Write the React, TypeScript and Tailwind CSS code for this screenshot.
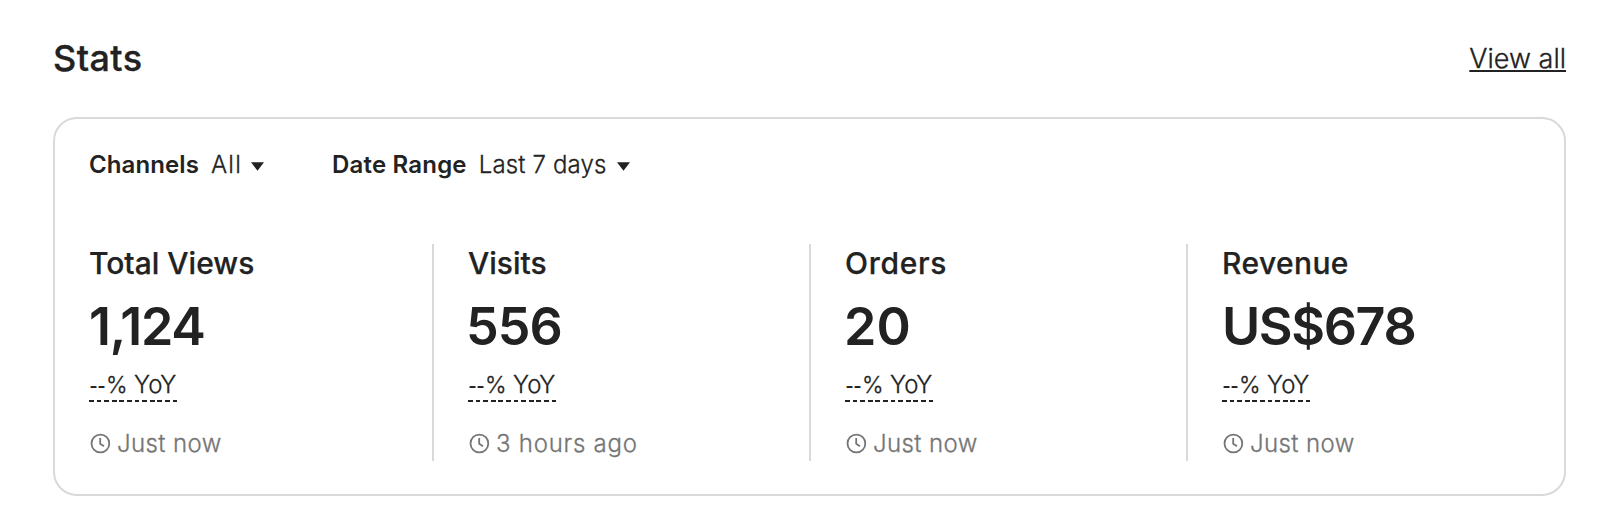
type Stat = {
  title: string;
  value: string;
  updated: string;
  titleClass: string;
  valueClass: string;
  updatedClass: string;
};

const stats: Stat[] = [
  { title: "Total Views", value: "1,124", updated: "Just now", titleClass: "", valueClass: "tracking-[-1.3px]", updatedClass: "tracking-[0.4px]" },
  { title: "Visits", value: "556", updated: "3 hours ago", titleClass: "", valueClass: "-ml-0.5 tracking-[-1px]", updatedClass: "tracking-[0.75px]" },
  { title: "Orders", value: "20", updated: "Just now", titleClass: "tracking-[0.7px]", valueClass: "-ml-px tracking-[0px]", updatedClass: "tracking-[0.4px]" },
  { title: "Revenue", value: "US$678", updated: "Just now", titleClass: "tracking-[0.4px]", valueClass: "tracking-[-1.4px]", updatedClass: "tracking-[0.4px]" },
];

function Caret() {
  return (
    <svg width="13" height="9" viewBox="0 0 13 9" className="mt-0.5 shrink-0" aria-hidden="true">
      <path d="M0 0.2H13L6.5 8.8Z" fill="#222" />
    </svg>
  );
}

function Clock() {
  return (
    <svg width="24" height="24" viewBox="0 0 24 24" fill="none" stroke="#757575" strokeWidth="1.8" className="shrink-0" aria-hidden="true">
      <circle cx="11.4" cy="11.5" r="8.9" />
      <path d="M11.2 6V11.8L15 14.2" />
    </svg>
  );
}

function StatColumn({ stat }: { stat: Stat }) {
  return (
    <div className="flex h-[217px] flex-col items-start border-l-2 border-[#d9d9d9] pl-[34px] first:border-l-0 first:pl-0">
      <h3 className={`mt-px text-[30px] leading-9 font-medium [-webkit-text-stroke:0.25px] ${stat.titleClass}`}>{stat.title}</h3>
      <p className={`mt-4 text-[52px] leading-[60px] font-semibold ${stat.valueClass}`}>{stat.value}</p>
      <button className="mt-4 flex w-[88px] flex-col items-start text-2xl leading-6 font-light whitespace-pre [-webkit-text-stroke:0.3px]">
        <span className="flex h-6">
          <span className="w-[17px] font-['Liberation_Sans',sans-serif] [-webkit-text-stroke:0px]">--</span>
          <span className="w-[28px] text-[23px]">{"% "}</span>
          <span>YoY</span>
        </span>
        <span className="mt-[3px] h-[2px] w-full bg-[repeating-linear-gradient(90deg,#222_0_4.8px,transparent_4.8px_7.6px)]" />
      </button>
      <div className="mt-[30px] flex items-center gap-1 text-2xl leading-6 font-light text-[#757575] [-webkit-text-stroke:0.3px]">
        <Clock />
        <span className={stat.updatedClass}>{stat.updated}</span>
      </div>
    </div>
  );
}

export default function App() {
  return (
    <main className="h-[529px] bg-white pt-[38px] pr-[34px] pl-[53px] font-['Inter','Liberation_Sans',sans-serif] text-[#222]">
      <header className="flex h-[79px] items-start justify-between">
        <h2 className="text-4xl leading-10 font-medium tracking-[0.4px] [-webkit-text-stroke:0.3px]">Stats</h2>
        <a href="#" className="text-[27px] leading-[42px] font-light underline decoration-2 underline-offset-2 [-webkit-text-stroke:0.3px]">
          View all
        </a>
      </header>
      <section className="h-[379px] rounded-[24px] border-2 border-[#d9d9d9] px-[34px] pt-[34px]">
        <div className="flex h-6 items-center text-2xl leading-6 whitespace-nowrap">
          <button className="flex items-center">
            <span className="font-semibold tracking-[0.1px]">Channels</span>
            <span className="mr-[9px] ml-3 font-light tracking-[1.2px] [-webkit-text-stroke:0.3px]">All</span>
            <Caret />
          </button>
          <button className="ml-[68px] flex items-center">
            <span className="font-semibold tracking-[0.2px]">Date Range</span>
            <span className="mr-[10px] ml-3 font-light tracking-[0.15px] [-webkit-text-stroke:0.3px]">Last 7 days</span>
            <Caret />
          </button>
        </div>
        <div className="mt-[67px] grid grid-cols-[343px_377px_377px_1fr]">
          {stats.map((stat) => (
            <StatColumn key={stat.title} stat={stat} />
          ))}
        </div>
      </section>
    </main>
  );
}
